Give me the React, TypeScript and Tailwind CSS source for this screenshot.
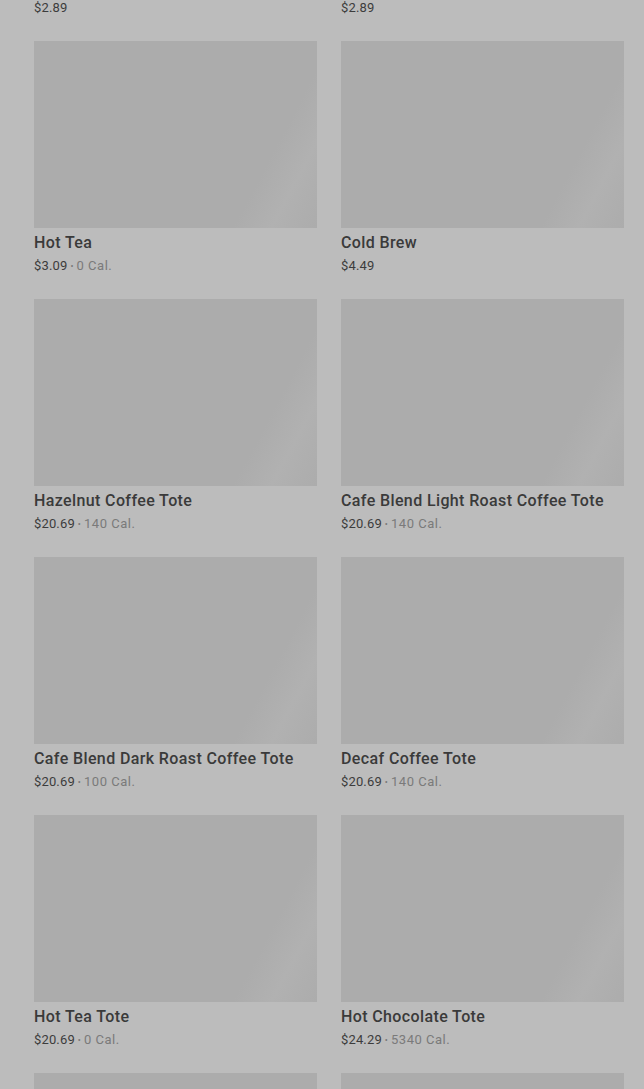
import React from 'react';

interface Product {
  name: string;
  price: string;
  calories?: string;
}

const products: Product[] = [
  { name: 'Iced Coffee', price: '$2.89' },
  { name: 'Iced Tea', price: '$2.89' },
  { name: 'Hot Tea', price: '$3.09', calories: '0 Cal.' },
  { name: 'Cold Brew', price: '$4.49' },
  { name: 'Hazelnut Coffee Tote', price: '$20.69', calories: '140 Cal.' },
  { name: 'Cafe Blend Light Roast Coffee Tote', price: '$20.69', calories: '140 Cal.' },
  { name: 'Cafe Blend Dark Roast Coffee Tote', price: '$20.69', calories: '100 Cal.' },
  { name: 'Decaf Coffee Tote', price: '$20.69', calories: '140 Cal.' },
  { name: 'Hot Tea Tote', price: '$20.69', calories: '0 Cal.' },
  { name: 'Hot Chocolate Tote', price: '$24.29', calories: '5340 Cal.' },
  { name: 'Box O Joe', price: '$20.69', calories: '140 Cal.' },
  { name: 'Hot Water', price: '$0.00', calories: '0 Cal.' },
];

function ProductCard({ product }: { product: Product }) {
  return (
    <div className="flex flex-col">
      <div className="h-[187px] w-full bg-[linear-gradient(118deg,#acacac_0%,#acacac_78%,#b1b1b1_88%,#acacac_100%)]" />
      <h3 className="mt-[5px] text-[16px] leading-[20px] font-medium tracking-[0.38px] text-[#3a3a3a]">
        {product.name}
      </h3>
      <div className="mt-[4px] flex items-center text-[13px] leading-[18px] tracking-[0.15px]">
        <span className="text-[#3c3c3c]">{product.price}</span>
        {product.calories && (
          <>
            <span className="mx-[3px] text-[9px] text-[#777]">•</span>
            <span className="tracking-[0.5px] text-[#7a7a7a]">{product.calories}</span>
          </>
        )}
      </div>
    </div>
  );
}

export default function App() {
  return (
    <div className="h-[1089px] w-[644px] overflow-hidden bg-[#bcbcbc] font-['Roboto',sans-serif]">
      <div className="-mt-[217px] grid grid-cols-2 gap-x-[24px] gap-y-[24px] pl-[34px] pr-[20px]">
        {products.map((p) => (
          <ProductCard key={p.name} product={p} />
        ))}
      </div>
    </div>
  );
}
